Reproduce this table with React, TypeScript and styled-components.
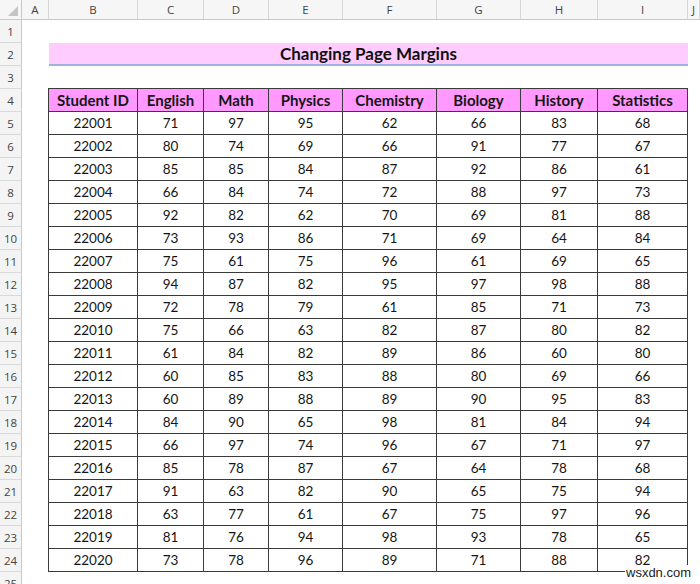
import React from "react";
import styled, { createGlobalStyle } from "styled-components";

const GlobalStyle = createGlobalStyle`
  html, body { margin: 0; padding: 0; background: #ffffff; }
  body { width: 700px; height: 584px; overflow: hidden; }
  * { box-sizing: border-box; }
`;

const COLS = "22px 27px 89px 66px 65px 74px 94px 84px 77px 90px 1fr";

const Sheet = styled.div`
  position: relative;
  width: 700px;
  height: 584px;
  overflow: hidden;
  background: #ffffff;
  font-family: "Lato", "Liberation Sans", sans-serif;
  color: #111;
`;

const HeaderRow = styled.div`
  display: grid;
  grid-template-columns: ${COLS};
  height: 20px;
  background: #f6f6f6;
  border-bottom: 1px solid #c9c9c9;
`;

const Corner = styled.div`
  position: relative;
  border-right: 1px solid #c9c9c9;
  &::after {
    content: "";
    position: absolute;
    right: 3px;
    bottom: 3px;
    width: 0;
    height: 0;
    border-left: 10px solid transparent;
    border-bottom: 10px solid #c4c4c4;
  }
`;

const ColHead = styled.div`
  display: flex;
  align-items: center;
  justify-content: center;
  font-family: "Open Sans", "Liberation Sans", sans-serif;
  font-size: 11.5px;
  color: #444;
  border-right: 1px solid #d6d6d6;
`;

const Row = styled.div`
  display: grid;
  grid-template-columns: ${COLS};
  height: 23px;
`;

const RowHead = styled.div`
  display: flex;
  align-items: center;
  justify-content: center;
  font-family: "Open Sans", "Liberation Sans", sans-serif;
  font-size: 11.5px;
  color: #444;
  background: #f4f4f4;
  border-right: 1px solid #c9c9c9;
  border-bottom: 1px solid #d9d9d9;
`;

const Blank = styled.div``;

const TitleBand = styled.div`
  grid-column: 3 / 11;
  display: flex;
  align-items: center;
  justify-content: center;
  background: #ffccff;
  border-bottom: 2px solid #9fb2de;
  font-weight: 700;
  font-size: 17px;
  color: #111;
`;

const Cell = styled.div<{ $head?: boolean; $first?: boolean; $top?: boolean }>`
  display: flex;
  align-items: center;
  justify-content: center;
  font-size: ${(p) => (p.$head ? "15px" : "13.5px")};
  font-weight: ${(p) => (p.$head ? 700 : 400)};
  background: ${(p) => (p.$head ? "#ff99ff" : "#ffffff")};
  color: #151515;
  border-right: 1px solid #3a3a3a;
  border-bottom: 1px solid #3a3a3a;
  ${(p) => (p.$first ? "border-left: 1px solid #3a3a3a; margin-left: -1px;" : "")}
  ${(p) => (p.$top ? "border-top: 1px solid #3a3a3a; margin-top: -1px;" : "")}
`;

const Watermark = styled.div`
  position: absolute;
  left: 625px;
  top: 565px;
  font-family: "Liberation Sans", Arial, sans-serif;
  font-size: 13px;
  color: #222;
  background: #ffffff;
  padding: 0 1px;
`;

const letters = ["A", "B", "C", "D", "E", "F", "G", "H", "I", "J"];
const headers = ["Student ID", "English", "Math", "Physics", "Chemistry", "Biology", "History", "Statistics"];

const data: number[][] = [
  [22001, 71, 97, 95, 62, 66, 83, 68],
  [22002, 80, 74, 69, 66, 91, 77, 67],
  [22003, 85, 85, 84, 87, 92, 86, 61],
  [22004, 66, 84, 74, 72, 88, 97, 73],
  [22005, 92, 82, 62, 70, 69, 81, 88],
  [22006, 73, 93, 86, 71, 69, 64, 84],
  [22007, 75, 61, 75, 96, 61, 69, 65],
  [22008, 94, 87, 82, 95, 97, 98, 88],
  [22009, 72, 78, 79, 61, 85, 71, 73],
  [22010, 75, 66, 63, 82, 87, 80, 82],
  [22011, 61, 84, 82, 89, 86, 60, 80],
  [22012, 60, 85, 83, 88, 80, 69, 66],
  [22013, 60, 89, 88, 89, 90, 95, 83],
  [22014, 84, 90, 65, 98, 81, 84, 94],
  [22015, 66, 97, 74, 96, 67, 71, 97],
  [22016, 85, 78, 87, 67, 64, 78, 68],
  [22017, 91, 63, 82, 90, 65, 75, 94],
  [22018, 63, 77, 61, 67, 75, 97, 96],
  [22019, 81, 76, 94, 98, 93, 78, 65],
  [22020, 73, 78, 96, 89, 71, 88, 82],
];

export default function App() {
  return (
    <>
      <GlobalStyle />
      <Sheet>
        <HeaderRow>
          <Corner />
          {letters.map((l) => (
            <ColHead key={l}>{l}</ColHead>
          ))}
        </HeaderRow>
        <Row>
          <RowHead>1</RowHead>
        </Row>
        <Row>
          <RowHead>2</RowHead>
          <Blank />
          <TitleBand>Changing Page Margins</TitleBand>
        </Row>
        <Row>
          <RowHead>3</RowHead>
        </Row>
        <Row>
          <RowHead>4</RowHead>
          <Blank />
          {headers.map((h, i) => (
            <Cell key={h} $head $first={i === 0} $top>
              {h}
            </Cell>
          ))}
        </Row>
        {data.map((r, ri) => (
          <Row key={ri}>
            <RowHead>{ri + 5}</RowHead>
            <Blank />
            {r.map((v, ci) => (
              <Cell key={ci} $first={ci === 0}>
                {v}
              </Cell>
            ))}
          </Row>
        ))}
        <Row>
          <RowHead>25</RowHead>
        </Row>
        <Watermark>wsxdn.com</Watermark>
      </Sheet>
    </>
  );
}
